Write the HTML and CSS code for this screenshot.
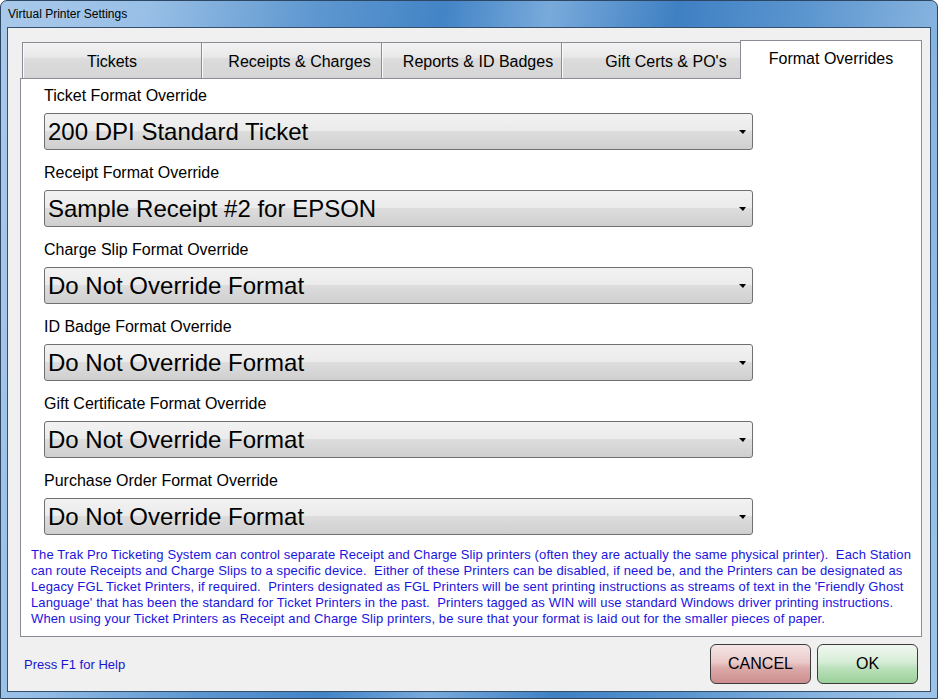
FILE: index.html
```html
<!DOCTYPE html>
<html lang="en">
<head>
    <meta charset="UTF-8">
    <title>Virtual Printer Settings</title>
    <link rel="stylesheet" href="styles.css">
</head>
<body>
    <div class="window">
        <div class="titlebar">Virtual Printer Settings</div>
        <div class="client">
            <div class="tabs">
                <div class="tab tab-first">Tickets</div>
                <div class="tab tab-receipts">Receipts &amp; Charges</div>
                <div class="tab tab-reports">Reports &amp; ID Badges</div>
                <div class="tab tab-gift">Gift Certs &amp; PO's</div>
                <div class="tab tab-active">Format Overrides</div>
            </div>
            <div class="panel">
                <div class="field">
                    <div class="label">Ticket Format Override</div>
                    <div class="combo"><span>200 DPI Standard Ticket</span><i class="arrow"></i></div>
                </div>
                <div class="field">
                    <div class="label">Receipt Format Override</div>
                    <div class="combo"><span>Sample Receipt #2 for EPSON</span><i class="arrow"></i></div>
                </div>
                <div class="field">
                    <div class="label">Charge Slip Format Override</div>
                    <div class="combo"><span>Do Not Override Format</span><i class="arrow"></i></div>
                </div>
                <div class="field">
                    <div class="label">ID Badge Format Override</div>
                    <div class="combo"><span>Do Not Override Format</span><i class="arrow"></i></div>
                </div>
                <div class="field">
                    <div class="label">Gift Certificate Format Override</div>
                    <div class="combo"><span>Do Not Override Format</span><i class="arrow"></i></div>
                </div>
                <div class="field">
                    <div class="label">Purchase Order Format Override</div>
                    <div class="combo"><span>Do Not Override Format</span><i class="arrow"></i></div>
                </div>
                <p class="info">The Trak Pro Ticketing System can control separate Receipt and Charge Slip printers (often they are actually the same physical printer).&nbsp; Each Station<br>can route Receipts and Charge Slips to a specific device.&nbsp; Either of these Printers can be disabled, if need be, and the Printers can be designated as<br>Legacy FGL Ticket Printers, if required.&nbsp; Printers designated as FGL Printers will be sent printing instructions as streams of text in the 'Friendly Ghost<br>Language' that has been the standard for Ticket Printers in the past.&nbsp; Printers tagged as WIN will use standard Windows driver printing instructions.<br>When using your Ticket Printers as Receipt and Charge Slip printers, be sure that your format is laid out for the smaller pieces of paper.</p>
            </div>
            <div class="footer">
                <span class="help">Press F1 for Help</span>
                <div class="buttons">
                    <button class="btn btn-cancel">CANCEL</button>
                    <button class="btn btn-ok">OK</button>
                </div>
            </div>
        </div>
    </div>
</body>
</html>
```

FILE: styles.css
```css
body {
    margin: 0;
    background: #fff;
    font-family: 'Liberation Sans', Arial, sans-serif;
}

.window {
    width: 938px;
    height: 699px;
    box-sizing: border-box;
    border: 1px solid #2c4663;
    border-radius: 7px 7px 0 0;
    padding: 0 6px 6px 6px;
    display: flex;
    flex-direction: column;
    background: linear-gradient(100deg, #a9c9ea 0%, #98bfe6 14%, #5e97d0 30%, #4384c6 42%, #79aadb 52%, #3f80c3 64%, #5b95cf 76%, #8bb6e0 90%, #9ec3e7 100%);
}

.titlebar {
    height: 26px;
    line-height: 26px;
    padding-left: 1px;
    font-size: 12px;
    color: #000;
}

.client {
    flex: 1;
    background: #f0f0f0;
    border: 1px solid #34506e;
    display: flex;
    flex-direction: column;
    padding-top: 12px;
}

/* Tabs */
.tabs {
    height: 38px;
    display: flex;
    align-items: flex-end;
    margin-left: 14px;
}

.tab {
    height: 36px;
    box-sizing: border-box;
    width: 180px;
    border: 1px solid #898c95;
    border-left: none;
    border-bottom: none;
    box-shadow: inset 1px 0 0 #fbfbfb;
    background: linear-gradient(#f2f2f2 0%, #e9e9e9 40%, #dcdcdc 45%, #d5d5d5 100%);
    display: flex;
    align-items: center;
    justify-content: center;
    padding-top: 2px;
    font-size: 16px;
    color: #000;
}

.tab-first {
    border-left: 1px solid #898c95;
}

.tab-receipts { padding-left: 16px; }
.tab-reports { padding-left: 13px; }
.tab-gift { width: 179px; padding-left: 30px; }

.tab-active {
    width: 182px;
    height: 39px;
    margin-left: -1px;
    margin-bottom: -1px;
    padding-top: 0;
    padding-bottom: 2px;
    border-left: 1px solid #898c95;
    box-shadow: none;
    background: #fff;
    position: relative;
    z-index: 1;
}

/* Panel */
.panel {
    margin: 0 8px 0 12px;
    background: #fff;
    border: 1px solid #898c95;
    padding: 7px 0 9px 0;
}

.field {
    padding-left: 23px;
    margin-bottom: 13px;
}

.field:last-of-type {
    margin-bottom: 0;
}

.label {
    font-size: 16px;
    line-height: 20px;
    margin-bottom: 7px;
    color: #000;
}

.combo {
    width: 709px;
    height: 37px;
    box-sizing: border-box;
    border: 1px solid #707070;
    border-radius: 3px;
    background: linear-gradient(#f2f2f2 0%, #ebebeb 48%, #dddddd 50%, #cfcfcf 100%);
    display: flex;
    align-items: center;
    justify-content: space-between;
    padding: 1px 6px 0 3px;
    font-size: 24px;
    color: #000;
}

.arrow {
    width: 0;
    height: 0;
    border-left: 4px solid transparent;
    border-right: 3px solid transparent;
    border-top: 4px solid #000;
}

.info {
    margin: 12px 0 0 0;
    padding-left: 10px;
    font-size: 13px;
    line-height: 16px;
    letter-spacing: 0.12px;
    white-space: nowrap;
    color: #1a14e0;
}

/* Footer */
.footer {
    flex: 1;
    display: flex;
    align-items: flex-start;
    justify-content: space-between;
    padding: 7px 12px 0 16px;
}

.help {
    margin-top: 13px;
    font-size: 13px;
    color: #1a14d0;
}

.buttons {
    display: flex;
    gap: 6px;
}

.btn {
    width: 101px;
    height: 40px;
    border: 1px solid #3c3c3c;
    border-radius: 6px;
    font-family: 'Liberation Sans', Arial, sans-serif;
    font-size: 16px;
    color: #000;
    padding: 0;
}

.btn-cancel {
    background: linear-gradient(#f5e6e6 0%, #ebcaca 45%, #dcaaaa 60%, #cc8d8d 100%);
}

.btn-ok {
    background: linear-gradient(#f1f8f1 0%, #d6ecd6 45%, #bde1bd 60%, #99d099 100%);
}
```
